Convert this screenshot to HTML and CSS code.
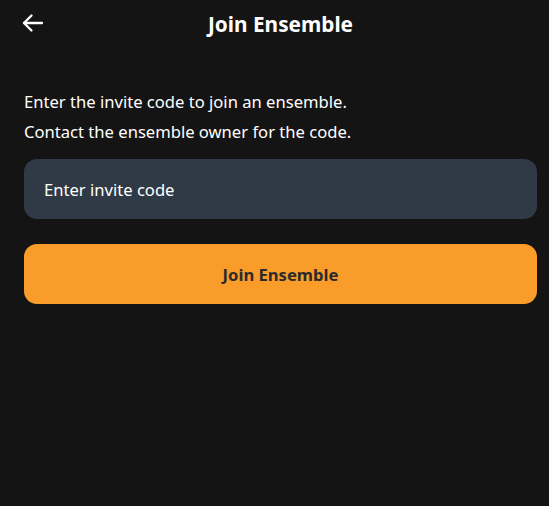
FILE: index.html
```html
<!DOCTYPE html>
<html lang="en">
<head>
<meta charset="utf-8">
<title>Join Ensemble</title>
<link rel="stylesheet" href="styles.css">
</head>
<body>
<div class="page">
  <header class="header">
    <button class="back" aria-label="Back">
      <svg width="24" height="24" viewBox="0 0 24 24" fill="none" stroke="#ffffff" stroke-width="2.3" stroke-linecap="round" stroke-linejoin="round">
        <path d="M21 12H3"/>
        <path d="M10.5 4.5L3 12l7.5 7.5"/>
      </svg>
    </button>
    <h1 class="title">Join Ensemble</h1>
  </header>
  <main class="content">
    <p class="intro">Enter the invite code to join an ensemble.<br>Contact the ensemble owner for the code.</p>
    <input class="code-input" type="text" placeholder="Enter invite code">
    <button class="join">Join Ensemble</button>
  </main>
</div>
</body>
</html>
```

FILE: styles.css
```css
html, body {
  margin: 0;
  padding: 0;
  background: #141414;
  color: #ffffff;
  font-family: "Noto Sans", "Open Sans", sans-serif;
}
.page {
  padding: 0 12px 0 24px;
}
.header {
  position: relative;
  height: 48px;
  display: flex;
  align-items: center;
  justify-content: center;
}
.back {
  position: absolute;
  left: -3px;
  top: 11px;
  background: none;
  border: 0;
  padding: 0;
  width: 24px;
  height: 24px;
  cursor: pointer;
}
.title {
  margin: 0;
  font-size: 20.8px;
  font-weight: 700;
  line-height: 48px;
}
.content {
  padding-top: 39px;
  display: flex;
  flex-direction: column;
}
.intro {
  margin: 0 0 12px;
  font-size: 16.6px;
  line-height: 30px;
}
.code-input {
  box-sizing: border-box;
  height: 60px;
  border: 0;
  border-radius: 13px;
  background: #2f3a46;
  color: #ffffff;
  padding: 0 20px;
  font-family: inherit;
  font-size: 16.6px;
  outline: none;
}
.code-input::placeholder {
  color: #ffffff;
  opacity: 1;
}
.join {
  margin-top: 25px;
  height: 60px;
  border: 0;
  border-radius: 13px;
  background: #f99c2a;
  color: #2b2b2b;
  font-family: inherit;
  font-size: 16.6px;
  font-weight: 700;
  cursor: pointer;
}
```
